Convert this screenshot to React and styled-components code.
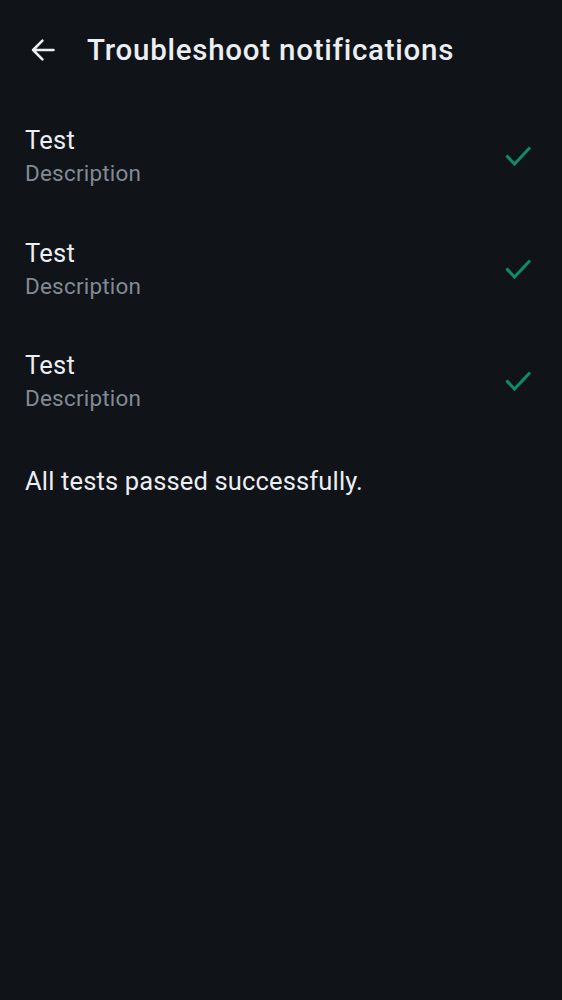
import React from 'react'
import styled, { createGlobalStyle } from 'styled-components'

const Global = createGlobalStyle`
  html, body {
    margin: 0;
    padding: 0;
    background: #101317;
  }
  body {
    font-family: Roboto, "Noto Sans", sans-serif;
    -webkit-font-smoothing: antialiased;
  }
`

const Screen = styled.div`
  width: 562px;
  height: 1000px;
  background: #101317;
  color: #ebeef2;
  display: flex;
  flex-direction: column;
`

const TopBar = styled.header`
  height: 100px;
  display: flex;
  align-items: center;
  padding: 0 0 0 29px;
  gap: 30px;
`

const BackButton = styled.button`
  width: 28px;
  height: 28px;
  padding: 0;
  border: 0;
  background: none;
  display: flex;
  align-items: center;
  justify-content: center;
  cursor: pointer;
`

const Title = styled.h1`
  margin: 0;
  font-size: 29.5px;
  font-weight: 500;
  letter-spacing: 0.75px;
  color: #ebeef2;
`

const List = styled.div`
  display: flex;
  flex-direction: column;
`

const Row = styled.div`
  height: 112.5px;
  display: flex;
  align-items: center;
  padding: 0 25px;
`

const Texts = styled.div`
  flex: 1;
  display: flex;
  flex-direction: column;
  gap: 4px;
`

const RowTitle = styled.div`
  font-size: 25.5px;
  line-height: 30px;
  letter-spacing: 0.25px;
  color: #ebeef2;
`

const RowDesc = styled.div`
  font-size: 22.5px;
  line-height: 28px;
  letter-spacing: 0.2px;
  color: #818a95;
`

const Summary = styled.p`
  margin: 28px 0 0;
  padding: 0 25px;
  font-size: 25.5px;
  line-height: 30px;
  letter-spacing: 0.15px;
  color: #ebeef2;
`

const CheckIcon = styled.svg`
  flex: none;
  margin-right: 5px;
`

const Check = ({ color = '#0f8a6b' }) => (
  <CheckIcon width="28" height="22" viewBox="0 0 28 22" fill="none">
    <path d="M3.5 11.5l7 7.5L25 3.5" stroke={color} strokeWidth="3" strokeLinecap="square" />
  </CheckIcon>
)

const tests = [
  { name: 'Test', desc: 'Description' },
  { name: 'Test', desc: 'Description' },
  { name: 'Test', desc: 'Description' },
]

export default function App() {
  return (
    <Screen>
      <Global />
      <TopBar>
        <BackButton aria-label="Back">
          <svg width="28" height="28" viewBox="0 0 24 24" fill="none">
            <path d="M21 12H3.5M11.5 4L3.5 12l8 8" stroke="#ebeef2" strokeWidth="2.2" strokeLinecap="round" strokeLinejoin="round" />
          </svg>
        </BackButton>
        <Title>Troubleshoot notifications</Title>
      </TopBar>
      <List>
        {tests.map((t, i) => (
          <Row key={i}>
            <Texts>
              <RowTitle>{t.name}</RowTitle>
              <RowDesc>{t.desc}</RowDesc>
            </Texts>
            <Check />
          </Row>
        ))}
      </List>
      <Summary>All tests passed successfully.</Summary>
    </Screen>
  )
}
